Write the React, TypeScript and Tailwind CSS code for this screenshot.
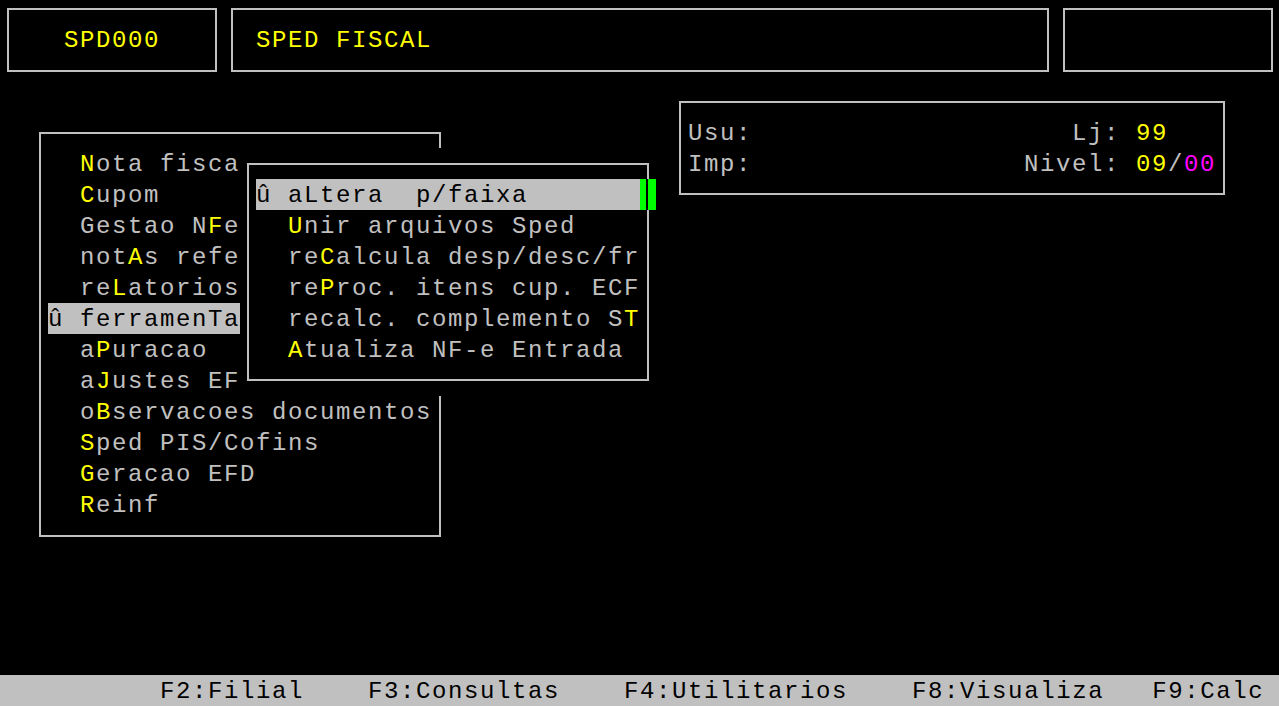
import React from "react";

type Seg = [string, string?];

const Y = "text-[#ffff00]";

function Row({ segs, className = "" }: { segs: Seg[]; className?: string }) {
  return (
    <div className={`h-[31px] leading-[33px] whitespace-pre ${className}`}>
      {segs.map(([t, c], i) => (
        <span key={i} className={c ?? ""}>
          {t}
        </span>
      ))}
    </div>
  );
}

function HiRow({ text, width }: { text: string; width: string }) {
  return (
    <div className={`h-[31px] leading-[33px] whitespace-pre bg-[#c0c0c0] text-black ${width}`}>
      {text}
    </div>
  );
}

export default function App() {
  return (
    <div className="relative w-[1279px] h-[706px] bg-black overflow-hidden flex flex-col font-['Liberation_Mono',monospace] text-[24px] tracking-[1.6px] text-[#c0c0c0]">
      {/* Header */}
      <div className="flex gap-[14px] pt-[8px] pl-[7px] h-[72px] shrink-0">
        <div className="w-[210px] h-[64px] border-2 border-[#c0c0c0] flex items-center justify-center pt-[2px] text-[#ffff00] whitespace-pre">
          SPD000
        </div>
        <div className="w-[818px] h-[64px] border-2 border-[#c0c0c0] flex items-center pl-[23px] pt-[2px] text-[#ffff00] whitespace-pre">
          SPED FISCAL
        </div>
        <div className="w-[210px] h-[64px] border-2 border-[#c0c0c0]" />
      </div>

      {/* Body */}
      <div className="flex-1 flex items-start pt-[29px] pl-[39px]">
        {/* Main menu */}
        <div className="relative mt-[31px] w-[402px] h-[405px] border-2 border-[#c0c0c0] pt-[14px] pl-[7px]">
          <Row segs={[["  "], ["N", Y], ["ota fiscal"]]} />
          <Row segs={[["  "], ["C", Y], ["upom"]]} />
          <Row segs={[["  Gestao N"], ["F", Y], ["e"]]} />
          <Row segs={[["  not"], ["A", Y], ["s referenciadas"]]} />
          <Row segs={[["  re"], ["L", Y], ["atorios"]]} />
          <HiRow text="û ferramenTas" width="w-[240px]" />
          <Row segs={[["  a"], ["P", Y], ["uracao"]]} />
          <Row segs={[["  a"], ["J", Y], ["ustes EFD"]]} />
          <Row segs={[["  o"], ["B", Y], ["servacoes documentos"]]} />
          <Row segs={[["  "], ["S", Y], ["ped PIS/Cofins"]]} />
          <Row segs={[["  "], ["G", Y], ["eracao EFD"]]} />
          <Row segs={[["  "], ["R", Y], ["einf"]]} />

          {/* Submenu overlay */}
          <div className="absolute left-[199px] top-[14px] bg-black px-[7px] py-[15px] z-10">
            <div className="w-[402px] h-[218px] border-2 border-[#c0c0c0] pt-[14px] pl-[7px]">
              <HiRow text="û aLtera  p/faixa" width="w-[384px]" />
              <Row segs={[["  "], ["U", Y], ["nir arquivos Sped"]]} />
              <Row segs={[["  re"], ["C", Y], ["alcula desp/desc/fr"]]} />
              <Row segs={[["  re"], ["P", Y], ["roc. itens cup. ECF"]]} />
              <Row segs={[["  recalc. complemento S"], ["T", Y]]} />
              <Row segs={[["  "], ["A", Y], ["tualiza NF-e Entrada"]]} />
            </div>
            {/* scroll indicator */}
            <div className="absolute left-[400px] top-[31px] w-[16px] h-[31px] bg-[#00ff00]">
              <div className="absolute left-[6px] top-0 w-[2px] h-[31px] bg-black" />
            </div>
          </div>
        </div>

        {/* Info box */}
        <div className="ml-[238px] w-[546px] h-[94px] border-2 border-[#c0c0c0] pt-[14px] pl-[7px]">
          <Row segs={[["Usu:                    Lj: "], ["99", Y]]} />
          <Row segs={[["Imp:                 Nivel: "], ["09", Y], ["/"], ["00", "text-[#ff00ff]"]]} />
        </div>
      </div>

      {/* Footer */}
      <div className="h-[31px] shrink-0 bg-[#c0c0c0] text-black leading-[33px] whitespace-pre pl-[160px]">
        {"F2:Filial    F3:Consultas    F4:Utilitarios    F8:Visualiza   F9:Calc"}
      </div>
    </div>
  );
}
